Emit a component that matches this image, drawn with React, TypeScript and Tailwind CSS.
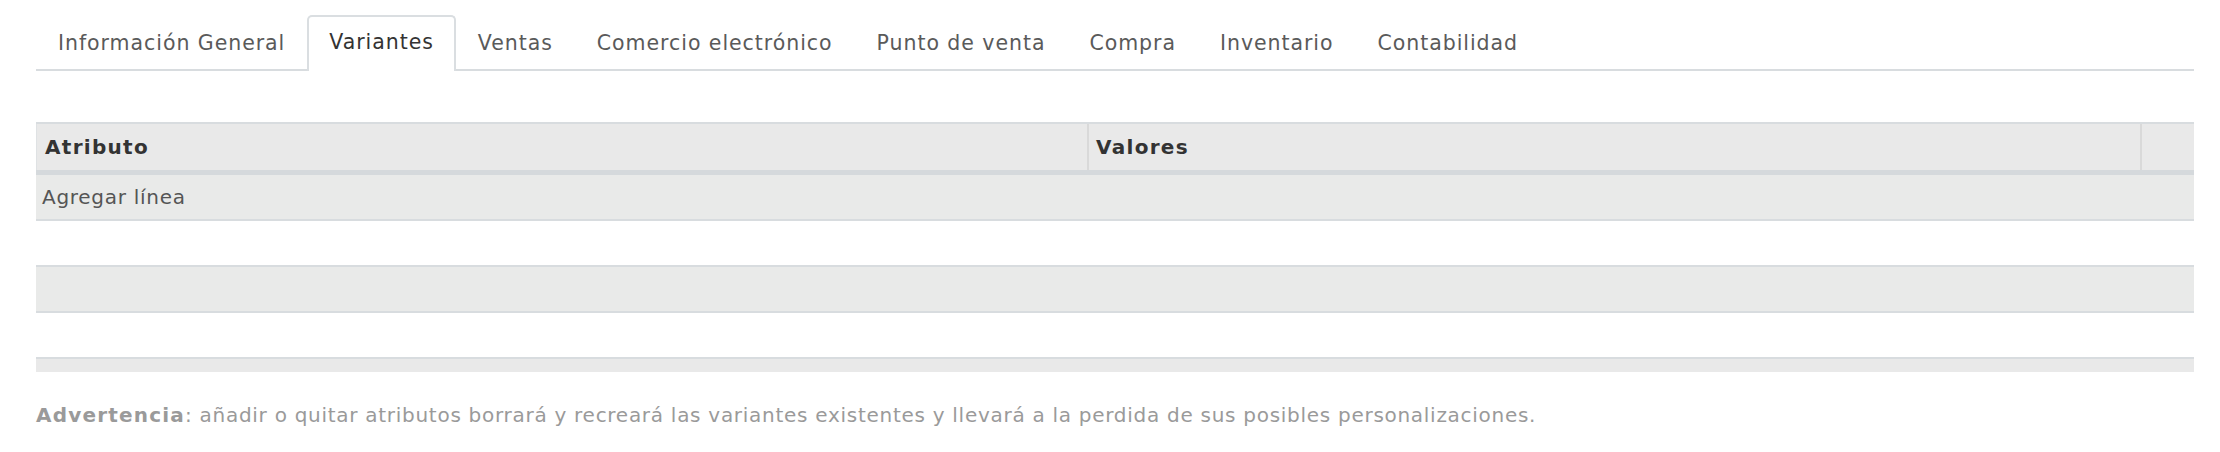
import React from "react";

const tabs = [
  "Información General",
  "Variantes",
  "Ventas",
  "Comercio electrónico",
  "Punto de venta",
  "Compra",
  "Inventario",
  "Contabilidad",
];

const TabBar: React.FC<{ active: string }> = ({ active }) => {
  return (
    <div className="flex border-b-2 border-[#d8dcdf] h-[56px] text-[20.5px] tracking-[0.95px]">
      {tabs.map((t) =>
        t === active ? (
          <div
            key={t}
            className="flex items-center px-[20px] pb-[4px] -mb-[2px] bg-white border-2 border-b-0 border-[#dadee1] rounded-t-[5px] text-[#333]"
          >
            {t}
          </div>
        ) : (
          <div key={t} className="flex items-center px-[22px] pt-[2px] text-[#5a5a5a]">
            {t}
          </div>
        )
      )}
    </div>
  );
};

const App: React.FC = () => {
  return (
    <div
      className="w-[2220px] h-[452px] bg-white pl-[36px] pr-[26px] pt-[15px] text-[20px] tracking-[0.72px] overflow-hidden"
      style={{ fontFamily: '"DejaVu Sans", "Open Sans", sans-serif' }}
    >
      <TabBar active="Variantes" />

      {/* tabla de atributos */}
      <div className="mt-[51px] h-[250px] overflow-hidden">
        <div className="grid grid-cols-[1053px_1053px_52px] h-[53px] bg-[#e9e9e9] border-t-2 border-[#d8dcdf] border-b-[5px] border-b-[#d5d9dc] font-semibold text-[#333] tracking-[1.3px]">
          <div className="flex items-center pl-[8px] border-l border-l-[#dfe2e4] border-r-2 border-r-[#d9d9d9]">
            Atributo
          </div>
          <div className="flex items-center pl-[7px] border-r-2 border-r-[#d9d9d9]">
            Valores
          </div>
          <div />
        </div>
        <div className="h-[46px] flex items-center pl-[6px] bg-[#e9eae9] border-b-2 border-[#d8dcdf] text-[#555]">
          Agregar línea
        </div>
        <div className="h-[46px] bg-white border-b-2 border-[#d8dcdf]" />
        <div className="h-[46px] bg-[#e9eae9] border-b-2 border-[#d8dcdf]" />
        <div className="h-[46px] bg-white border-b-2 border-[#d8dcdf]" />
        <div className="h-[13px] bg-[#e9e9e9]" />
      </div>

      <p className="mt-[28px] text-[#9a9a9a]">
        <span className="font-semibold tracking-[1.2px]">Advertencia</span>: añadir o quitar
        atributos borrará y recreará las variantes existentes y llevará a la perdida de sus posibles
        personalizaciones.
      </p>
    </div>
  );
};

export default App;
